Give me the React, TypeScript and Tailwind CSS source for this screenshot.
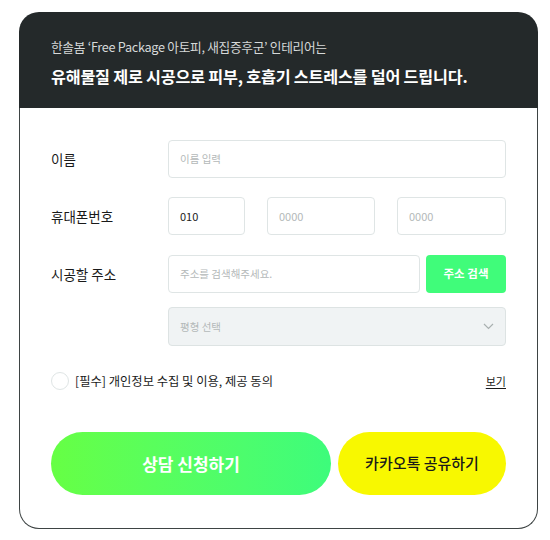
import React from "react";

const font = { fontFamily: '"Noto Sans CJK KR", "Noto Sans", sans-serif' };

export default function App() {
  return (
    <div className="w-[550px] h-[540px] bg-white" style={font}>
      <div className="ml-[19px] pt-[12px] w-[519px]">
        <div className="rounded-t-[20px] bg-[#24292a] h-[96px] pl-[32px] pt-[27px]">
          <p className="text-[12.7px] leading-[16px] text-[#d6d9d9] tracking-[-0.3px]">
            한솔봄 ‘Free Package 아토피, 새집증후군’ 인테리어는
          </p>
          <p className="mt-[10px] text-[16.2px] leading-[22px] font-bold text-white tracking-[-0.2px]">
            유해물질 제로 시공으로 피부, 호흡기 스트레스를 덜어 드립니다.
          </p>
        </div>
        <div className="border border-t-0 border-[#3e4444] rounded-b-[20px] px-[31px] pt-[32px] pb-[33px]">
          {/* name */}
          <div className="flex items-center h-[38px]">
            <div className="w-[117px] text-[13.5px] text-[#1a1a1a]">이름</div>
            <div className="flex-1 h-full border border-[#dfe5e5] rounded-[4px] flex items-center px-[11px] text-[10.5px] text-[#b4b9b9]">
              이름 입력
            </div>
          </div>
          {/* phone */}
          <div className="flex items-center h-[38px] mt-[19px]">
            <div className="w-[117px] text-[13.5px] text-[#1a1a1a]">휴대폰번호</div>
            <div className="w-[77px] h-full border border-[#dfe5e5] rounded-[4px] flex items-center px-[11px] text-[11px] text-[#222]">
              010
            </div>
            <div className="ml-[22px] w-[108px] h-full border border-[#dfe5e5] rounded-[4px] flex items-center px-[11px] text-[11px] text-[#b4b9b9]">
              0000
            </div>
            <div className="ml-[22px] flex-1 h-full border border-[#dfe5e5] rounded-[4px] flex items-center px-[11px] text-[11px] text-[#b4b9b9]">
              0000
            </div>
          </div>
          {/* address */}
          <div className="flex items-center h-[38px] mt-[20px]">
            <div className="w-[117px] text-[13.5px] text-[#1a1a1a]">시공할 주소</div>
            <div className="w-[252px] h-full border border-[#dfe5e5] rounded-[4px] flex items-center px-[11px] text-[10.5px] text-[#b4b9b9]">
              주소를 검색해주세요.
            </div>
            <div className="ml-[6px] flex-1 h-full rounded-[4px] bg-[#40fc7a] flex items-center justify-center text-[11.5px] font-bold text-white">
              주소 검색
            </div>
          </div>
          <div className="flex h-[39px] mt-[14px]">
            <div className="w-[117px]" />
            <div className="flex-1 h-full border border-[#dde3e3] bg-[#f0f3f4] rounded-[4px] flex items-center justify-between px-[11px] text-[10.5px] text-[#b4b9b9]">
              <span>평형 선택</span>
              <svg width="11" height="7" viewBox="0 0 11 7" fill="none">
                <path d="M1 1l4.5 4.5L10 1" stroke="#a9b0b0" strokeWidth="1.2" />
              </svg>
            </div>
          </div>
          {/* agreement */}
          <div className="flex items-center justify-between mt-[25px] h-[20px]">
            <div className="flex items-center">
              <div className="w-[18px] h-[18px] rounded-full border border-[#dfe5e5]" />
              <span className="ml-[6px] text-[12.3px] text-[#1a1a1a]">[필수] 개인정보 수집 및 이용, 제공 동의</span>
            </div>
            <span className="text-[11px] text-[#1a1a1a] underline underline-offset-2">보기</span>
          </div>
          {/* buttons */}
          <div className="flex mt-[41px] h-[63px]">
            <div className="w-[280px] h-full rounded-full bg-gradient-to-r from-[#66ff44] to-[#3dfc7b] flex items-center justify-center text-[17px] font-bold text-white">
              상담 신청하기
            </div>
            <div className="ml-[7px] flex-1 h-full rounded-full bg-[#f8f800] flex items-center justify-center text-[15px] font-medium text-[#1a1a1a]">
              카카오톡 공유하기
            </div>
          </div>
        </div>
      </div>
    </div>
  );
}
